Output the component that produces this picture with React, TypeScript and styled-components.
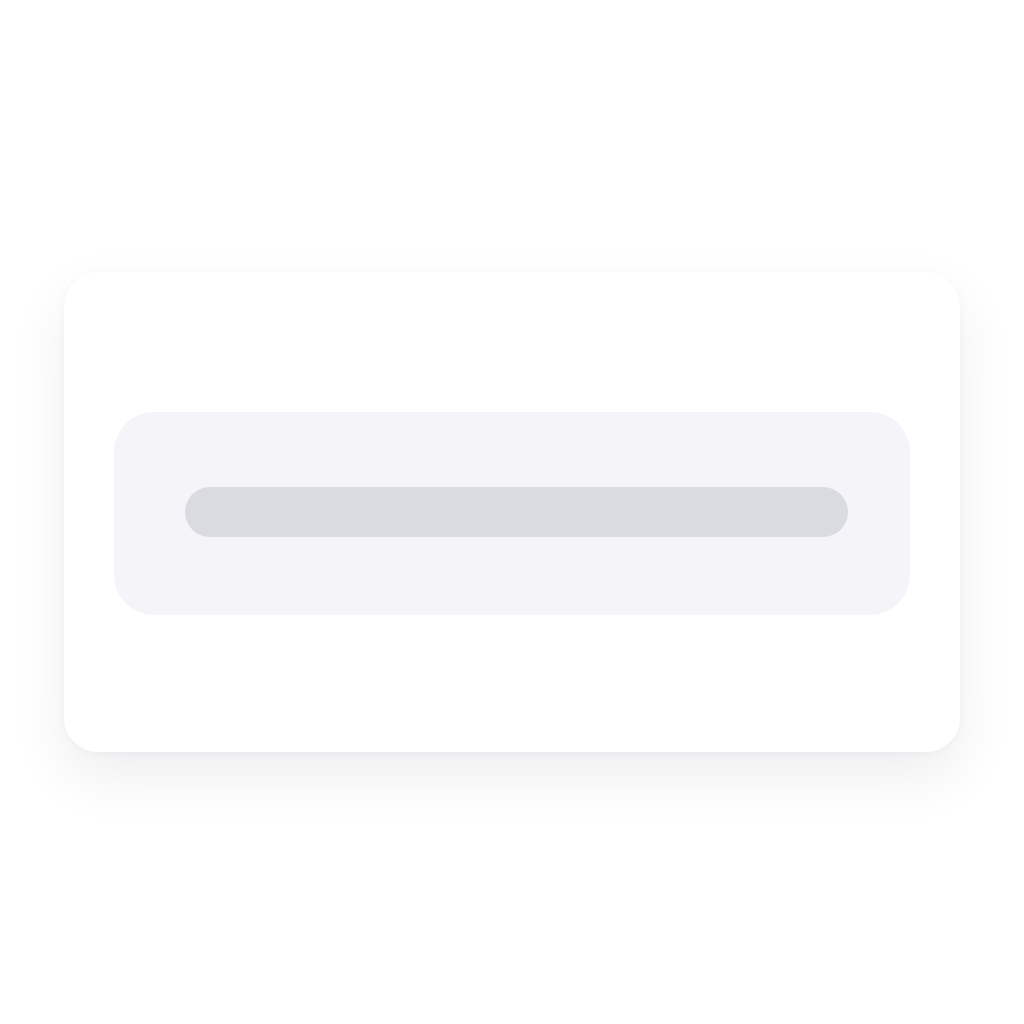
import React from "react";
import styled, { createGlobalStyle } from "styled-components";

const Global = createGlobalStyle`
  html, body { margin: 0; padding: 0; background: #ffffff; font-family: "Inter", "Liberation Sans", sans-serif; }
`;

const Page = styled.div`
  width: 1024px;
  height: 1024px;
  display: flex;
  align-items: center;
  justify-content: center;
  background: #ffffff;
`;

const Card = styled.div`
  width: 896px;
  height: 480px;
  box-sizing: border-box;
  background: #ffffff;
  border-radius: 34px;
  box-shadow: 0 24px 60px rgba(20, 20, 40, 0.07), 0 2px 10px rgba(20, 20, 40, 0.03);
  display: flex;
  align-items: center;
  padding: 3px 50px 0;
`;

const Panel = styled.div`
  flex: 1;
  height: 203px;
  box-sizing: border-box;
  background: #f4f4f9;
  border-radius: 40px;
  display: flex;
  align-items: center;
  padding-left: 71px;
  padding-bottom: 3px;
`;

const Bar = styled.div<{ $width: number }>`
  width: ${(p) => p.$width}px;
  height: 50px;
  border-radius: 25px;
  background: #dadae1;
`;

export default function App() {
  return (
    <>
      <Global />
      <Page>
        <Card>
          <Panel>
            <Bar $width={663} />
          </Panel>
        </Card>
      </Page>
    </>
  );
}
